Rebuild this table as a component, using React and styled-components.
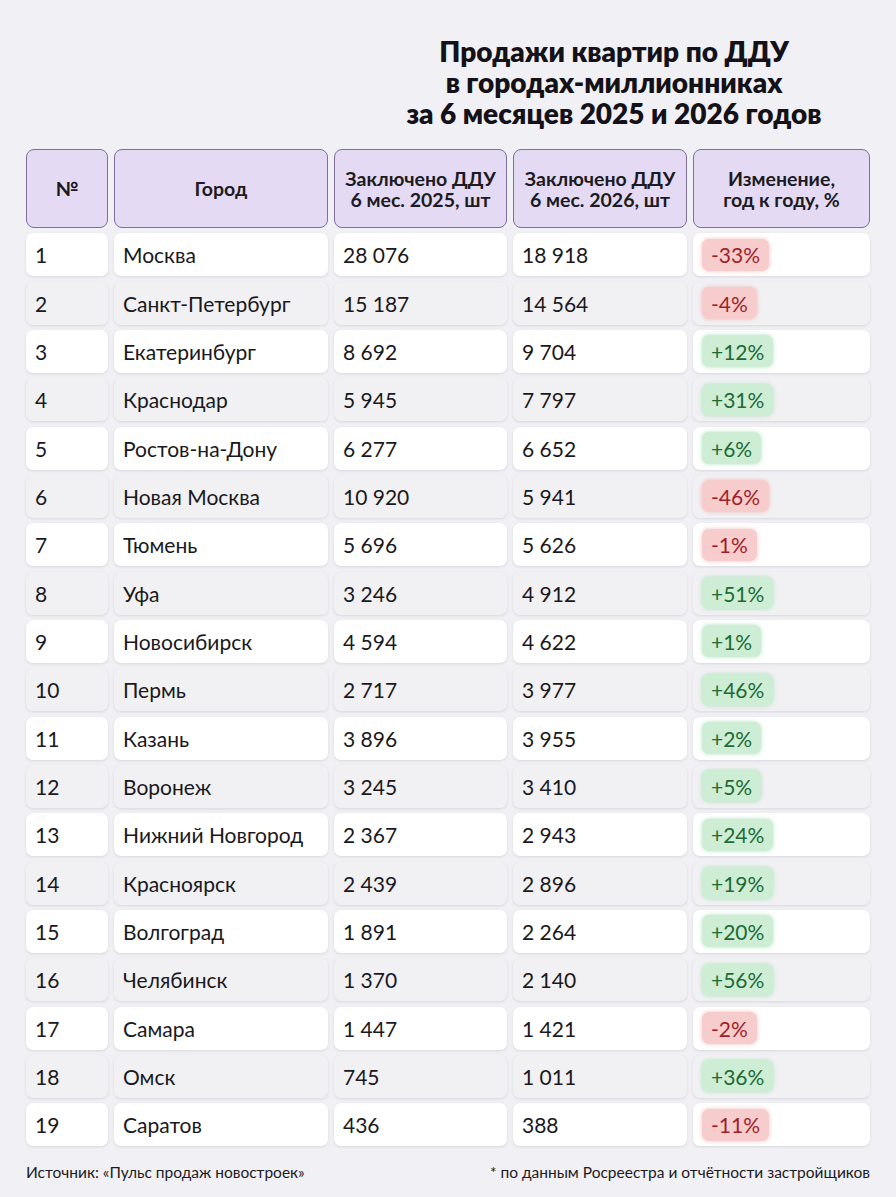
import React from "react";
import styled, { createGlobalStyle } from "styled-components";

const Global = createGlobalStyle`
  html, body { margin: 0; padding: 0; background: #f1f1f5; }
  body { font-family: Lato, "Noto Sans", sans-serif; color: #1c1a22; }
`;

const Page = styled.div`
  width: 896px;
  min-height: 1197px;
  box-sizing: border-box;
  padding: 36px 26px 0 26px;
  background: #f1f1f5;
  display: flex;
  flex-direction: column;
`;

const Title = styled.h1`
  margin: 0 0 0 350px;
  width: 476px;
  display: flex;
  flex-direction: column;
  align-items: center;
  font-family: Lato, sans-serif;
  font-weight: 800;
  font-size: 28px;
  color: #141218;
`;

const TitleLine = styled.span`
  display: block;
  line-height: 31px;
  height: 31px;
  white-space: nowrap;
`;

const Table = styled.div`
  margin-top: 20px;
  display: grid;
  grid-template-columns: 82px 214px 173px 174px 177px;
  column-gap: 6px;
  row-gap: 5.33px;
  grid-auto-rows: 43px;
  grid-template-rows: 79px;
`;

const HeadCell = styled.div`
  box-sizing: border-box;
  background: #e4daf3;
  border: 1.5px solid #7f6f9d;
  border-radius: 8px;
  display: flex;
  align-items: center;
  justify-content: center;
  text-align: center;
  font-family: Lato, sans-serif;
  font-weight: 700;
  font-size: 19.5px;
  line-height: 21px;
  color: #1c1a22;
`;

const Cell = styled.div`
  box-sizing: border-box;
  background: ${(p) => (p.$alt ? "#f1f1f4" : "#ffffff")};
  border-radius: 7px;
  box-shadow: 0 1px 3px rgba(40, 30, 60, 0.13);
  display: flex;
  align-items: center;
  padding-left: 9px;
  font-family: Lato, sans-serif;
  font-size: 21px;
  color: #1a1820;
`;

const Badge = styled.span`
  display: inline-flex;
  align-items: center;
  height: 32px;
  padding: 0 9px;
  border-radius: 7px;
  font-size: 21px;
  background: ${(p) => (p.$neg ? "#f6cccd" : "#cdeed5")};
  color: ${(p) => (p.$neg ? "#9e1f28" : "#1d6a34")};
  box-shadow: 0 0 4px ${(p) => (p.$neg ? "rgba(240,150,150,0.6)" : "rgba(140,210,160,0.6)")};
`;

const Footer = styled.div`
  margin-top: 17px;
  display: flex;
  justify-content: space-between;
  font-family: Lato, sans-serif;
  font-size: 15.5px;
  color: #1c1a22;
`;

const rows = [
  ["Москва", "28 076", "18 918", "-33%"],
  ["Санкт-Петербург", "15 187", "14 564", "-4%"],
  ["Екатеринбург", "8 692", "9 704", "+12%"],
  ["Краснодар", "5 945", "7 797", "+31%"],
  ["Ростов-на-Дону", "6 277", "6 652", "+6%"],
  ["Новая Москва", "10 920", "5 941", "-46%"],
  ["Тюмень", "5 696", "5 626", "-1%"],
  ["Уфа", "3 246", "4 912", "+51%"],
  ["Новосибирск", "4 594", "4 622", "+1%"],
  ["Пермь", "2 717", "3 977", "+46%"],
  ["Казань", "3 896", "3 955", "+2%"],
  ["Воронеж", "3 245", "3 410", "+5%"],
  ["Нижний Новгород", "2 367", "2 943", "+24%"],
  ["Красноярск", "2 439", "2 896", "+19%"],
  ["Волгоград", "1 891", "2 264", "+20%"],
  ["Челябинск", "1 370", "2 140", "+56%"],
  ["Самара", "1 447", "1 421", "-2%"],
  ["Омск", "745", "1 011", "+36%"],
  ["Саратов", "436", "388", "-11%"],
];

export default function App() {
  return (
    <Page>
      <Global />
      <Title>
        <TitleLine>Продажи квартир по ДДУ</TitleLine>
        <TitleLine>в городах-миллионниках</TitleLine>
        <TitleLine>за 6 месяцев 2025 и 2026 годов</TitleLine>
      </Title>
      <Table>
        <HeadCell>№</HeadCell>
        <HeadCell>Город</HeadCell>
        <HeadCell>
          Заключено ДДУ
          <br />6 мес. 2025, шт
        </HeadCell>
        <HeadCell>
          Заключено ДДУ
          <br />6 мес. 2026, шт
        </HeadCell>
        <HeadCell>
          Изменение,
          <br />год к году, %
        </HeadCell>
        {rows.map((r, i) => {
          const alt = i % 2 === 1;
          return (
            <React.Fragment key={i}>
              <Cell $alt={alt}>{i + 1}</Cell>
              <Cell $alt={alt}>{r[0]}</Cell>
              <Cell $alt={alt}>{r[1]}</Cell>
              <Cell $alt={alt}>{r[2]}</Cell>
              <Cell $alt={alt}>
                <Badge $neg={r[3].startsWith("-")}>{r[3]}</Badge>
              </Cell>
            </React.Fragment>
          );
        })}
      </Table>
      <Footer>
        <span>Источник: «Пульс продаж новостроек»</span>
        <span>* по данным Росреестра и отчётности застройщиков</span>
      </Footer>
    </Page>
  );
}
